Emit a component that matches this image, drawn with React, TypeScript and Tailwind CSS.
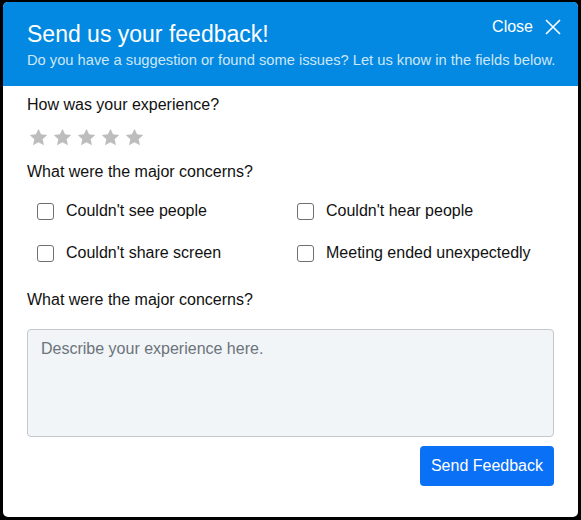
import React from "react";

const Star = () => (
  <svg width="19" height="18" viewBox="0 0 24 23" fill="#bdbdbd">
    <path d="M12 0.8l3.3 7.3 7.9 0.8-5.9 5.4 1.7 7.9L12 18.2l-7 4 1.7-7.9L0.8 8.9l7.9-0.8z" />
  </svg>
);

const Check = ({ label }: { label: string }) => (
  <label className="flex items-center h-6">
    <span className="w-[17px] h-[17px] border-[1.5px] border-[#6f6f6f] rounded-[3px] bg-white shrink-0" />
    <span className="ml-[12px] text-[16px] leading-6 text-[#111]">{label}</span>
  </label>
);

export default function App() {
  return (
    <div
      className="w-[581px] h-[520px] bg-black pt-[2px] px-[3px] pb-[3px]"
      style={{ fontFamily: '"Liberation Sans", Arial, sans-serif' }}
    >
      <div className="w-full h-full bg-white rounded-[5px] overflow-hidden flex flex-col">
        <div className="bg-[#0389e1] h-[84px] shrink-0 pl-6 pr-[17px] pt-[18px]">
          <div className="flex justify-between items-start">
            <div className="text-white text-[23px] leading-7">Send us your feedback!</div>
            <div className="flex items-center gap-3 -mt-[5px] text-white text-[16px] leading-6">
              <span>Close</span>
              <svg width="16" height="16" viewBox="0 0 16 16" stroke="white" strokeWidth="1.6" fill="none">
                <path d="M1 1L15 15M15 1L1 15" />
              </svg>
            </div>
          </div>
          <div className="mt-[2px] text-[14.7px] leading-5 text-[#cde6f8]">
            Do you have a suggestion or found some issues? Let us know in the fields below.
          </div>
        </div>
        <div className="flex-1 px-6 pt-[7px] flex flex-col">
          <div className="text-[16px] leading-6 text-[#111]">How was your experience?</div>
          <div className="flex gap-[5px] mt-[11px] ml-[2px]">
            <Star />
            <Star />
            <Star />
            <Star />
            <Star />
          </div>
          <div className="mt-[14px] text-[16px] leading-6 text-[#111]">What were the major concerns?</div>
          <div className="mt-[15px] pl-[10px] grid grid-cols-[260px_1fr] gap-y-[18px]">
            <Check label="Couldn't see people" />
            <Check label="Couldn't hear people" />
            <Check label="Couldn't share screen" />
            <Check label="Meeting ended unexpectedly" />
          </div>
          <div className="mt-[23px] text-[16px] leading-6 text-[#111]">What were the major concerns?</div>
          <textarea
            className="mt-[17px] h-[108px] w-full resize-none rounded-[4px] border border-[#c4c8cc] bg-[#f1f5f8] px-[13px] py-[7px] text-[16px] leading-6 text-[#333] placeholder:text-[#6c737a] outline-none"
            style={{ fontFamily: '"Liberation Sans", Arial, sans-serif' }}
            placeholder="Describe your experience here."
          />
          <div className="flex justify-end mt-[9px]">
            <button className="h-10 px-[11px] rounded-[4px] bg-[#0a70f5] text-white text-[16px] leading-6">
              Send Feedback
            </button>
          </div>
        </div>
      </div>
    </div>
  );
}
